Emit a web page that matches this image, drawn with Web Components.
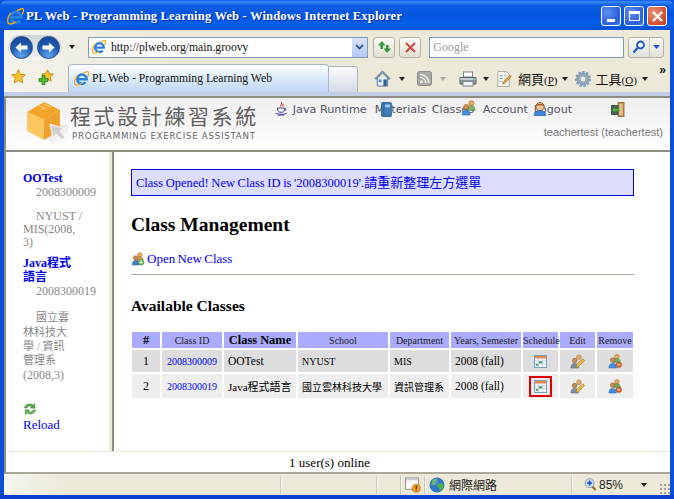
<!DOCTYPE html>
<html>
<head>
<meta charset="utf-8">
<title>PL Web</title>
<style>
    html, body { margin: 0; padding: 0; width: 674px; height: 499px; overflow: hidden; background: #0a50d8; }
</style>
</head>
<body>
<ie-window>
    <ie-titlebar slot="title"></ie-titlebar>
    <ie-navbar slot="nav"></ie-navbar>
    <ie-tabbar slot="tabs"></ie-tabbar>
    <pl-header slot="page"></pl-header>
    <pl-body slot="page">
        <pl-sidebar slot="side"></pl-sidebar>
        <pl-main slot="main"></pl-main>
    </pl-body>
    <pl-footer slot="page"></pl-footer>
    <ie-status slot="status"></ie-status>
</ie-window>

<script>
const CJK = '"Liberation Serif", "Noto Sans CJK TC", serif';
const UI_CJK = '"Liberation Sans", "Noto Sans CJK TC", sans-serif';

// all the little icons live here, keyed by name
const ICONS = {
    ie: `<svg viewBox="0 0 16 16"><path d="M4.800 8.700h8.700A5 5 0 1 0 12.300 12" fill="none" stroke="#2a82dc" stroke-width="2.700"/><path d="M3.600 4.600C1 7.600 0 12 1.100 14.100c1.400 1.900 5 .5 7-1" fill="none" stroke="#f2a61c" stroke-width="1.400"/><path d="M9.300 2.600C11.500 1 14.800 0 15.500 1.300c.5 1-.2 3-1.300 4.600" fill="none" stroke="#f2a61c" stroke-width="1.400"/></svg>`,
    star: `<svg viewBox="0 0 16 16"><path d="M8 .8l2.200 4.700 5 .6-3.700 3.500 1 5.100L8 12.200l-4.500 2.500 1-5.100L.8 6.100l5-.6z" fill="#fbc22f" stroke="#c98512" stroke-width=".9"/></svg>`,
    staradd: `<svg viewBox="0 0 16 16"><path d="M9.500 .8l1.800 3.800 4.100.5-3 2.900.8 4.100-3.700-2-3.700 2 .8-4.100-3-2.900 4.100-.5z" fill="#fbc22f" stroke="#c98512" stroke-width=".9"/><path d="M4 6.500h3v3h3v3H7v3H4v-3H1v-3h3z" fill="#55bb33" stroke="#2a7d18" stroke-width=".8"/></svg>`,
    home: `<svg viewBox="0 0 18 18"><path d="M3.500 8v9h11V8" fill="#e8eef6" stroke="#5c7390"/><path d="M9 1L1 9l1 1 7-6.800L16 10l1-1z" fill="#8aa7cc" stroke="#4b6488" stroke-width=".8"/><rect x="10" y="10" width="3.500" height="7" fill="#2a5da0"/><rect x="5" y="10" width="3" height="3" fill="#5a8ad0"/></svg>`,
    rss: `<svg viewBox="0 0 15 15"><rect x=".5" y=".5" width="14" height="14" rx="2" fill="#a9a9a4" stroke="#8c8c88"/><circle cx="4.500" cy="10.800" r="1.500" fill="#eee"/><path d="M3.200 6.500a5.300 5.300 0 0 1 5.500 5.500M3.200 3.500a8.400 8.400 0 0 1 8.500 8.500" fill="none" stroke="#eee" stroke-width="1.500"/></svg>`,
    print: `<svg viewBox="0 0 18 16"><rect x="4.500" y="1" width="9" height="5" fill="#fff" stroke="#7d8590"/><path d="M1 6.500h16v6.500H1z" fill="#8e95a0" stroke="#596069"/><rect x="1.500" y="7" width="15" height="2" fill="#c8ced6"/><rect x="4" y="10.500" width="10" height="4.500" fill="#f5f5f5" stroke="#7d8590"/><rect x="14" y="7.500" width="2" height="1" fill="#46b04a"/></svg>`,
    page: `<svg viewBox="0 0 16 17"><path d="M1.500 .5h9l3 3v13h-12z" fill="#f7f7f2" stroke="#a8a8a0"/><path d="M3.500 5h3M3.500 8h3M3.500 11h2" stroke="#7f9db9"/><path d="M8 5h3M8 8h1" stroke="#b0b0a8"/><path d="M6.500 14l.8-2.500 7-7 1.500 1.500-7 7z" fill="#e8a33a" stroke="#99651b" stroke-width=".6"/></svg>`,
    gear: `<svg viewBox="0 0 16 16"><circle cx="8" cy="8" r="5" fill="none" stroke="#8ba2bd" stroke-width="3"/><circle cx="8" cy="8" r="7" fill="none" stroke="#7d97b5" stroke-width="2" stroke-dasharray="2.400 1.600"/><circle cx="8" cy="8" r="3" fill="#f2f0e4" stroke="#6f86a2" stroke-width=".8"/></svg>`,
    java: `<svg viewBox="0 0 14 16"><path d="M7 1c1.500 2-1.800 3-.6 5M9 3C8 4.500 8 5 8.800 6" fill="none" stroke="#d8342a" stroke-width="1.100"/><path d="M3 7.500h7v2.500c0 1.500-1.500 2-3.500 2S3 11.500 3 10z" fill="#fff" stroke="#34349a"/><path d="M10 8c2.500-.5 2.500 2-.2 2.300" fill="none" stroke="#34349a"/><path d="M1 13c3 1.600 9 1.600 12 0M3 15h7" fill="none" stroke="#34349a"/></svg>`,
    book: `<svg viewBox="0 0 12 17"><rect x=".5" y=".5" width="11" height="16" rx="1" fill="#3f7fb8" stroke="#235a8e"/><rect x="2.500" y="1" width="1" height="15" fill="#2a6398"/><rect x="4.500" y="3" width="5.500" height="3" fill="#a8d0ee"/></svg>`,
    users: `<svg viewBox="0 0 16 17"><circle cx="10.500" cy="3.500" r="2.800" fill="#e8a860" stroke="#a86a28" stroke-width=".6"/><path d="M6.500 11c0-3.500 1.500-4.800 4-4.800s4 1.300 4 4.800z" fill="#7cb860" stroke="#4d8a38" stroke-width=".6"/><circle cx="5" cy="7.500" r="2.800" fill="#d89048" stroke="#8a5a28" stroke-width=".6"/><path d="M.8 16c0-3.800 1.500-5.300 4.200-5.300s4.200 1.500 4.200 5.300z" fill="#3f8ede" stroke="#2565ab" stroke-width=".6"/></svg>`,
    user: `<svg viewBox="0 0 14 15"><circle cx="7" cy="5" r="4.500" fill="#f0c090" stroke="#8a5228"/><path d="M2.500 4.500C3 1 11 1 11.500 4.500 9 3 5 3 2.500 4.500z" fill="#9a5a28"/><path d="M.8 14.500c0-4 2.500-5 6.200-5s6.200 1 6.200 5z" fill="#3c86dc" stroke="#1f55a3" stroke-width=".7"/></svg>`,
    exit: `<svg viewBox="0 0 15 15"><rect x="8" y=".5" width="6" height="14" fill="#c89a58" stroke="#8a6230" stroke-width=".8"/><rect x="9.500" y="2" width="3" height="11" fill="#e8c48a"/><rect x="1" y="3" width="7.500" height="10" fill="#4e5a50"/><path d="M2 8l3-3v1.800h4v2.400H5V11z" fill="#58c048" stroke="#2d7a22" stroke-width=".6"/></svg>`,
    addclass: `<svg viewBox="0 0 14 15"><circle cx="9" cy="3" r="2.500" fill="#eaa850" stroke="#a86a28" stroke-width=".5"/><path d="M6 9c0-3 1-4 3-4s3.500 1 3.500 4z" fill="#d8a058" stroke="#a07030" stroke-width=".5"/><circle cx="4.500" cy="6.500" r="2.500" fill="#c88a50" stroke="#7a5028" stroke-width=".5"/><path d="M.8 14c0-3.500 1.200-4.800 3.700-4.800S8 10.500 8 14z" fill="#3f80c8" stroke="#265f9e" stroke-width=".5"/><circle cx="10.300" cy="11" r="3" fill="#5cb848" stroke="#2f8022" stroke-width=".5"/><path d="M10.300 9v4M8.300 11h4" stroke="#fff"/></svg>`,
    reload: `<svg viewBox="0 0 14 14"><path d="M1.500 6C2 2.500 6.500 .8 10 3l1.500-1.500.5 4.700-4.700-.3L8.800 4.500C6.500 3.500 4.500 4.300 3.800 6z" fill="#59a84e" stroke="#36782e" stroke-width=".5"/><path d="M12.500 8c-.5 3.500-5 5.200-8.500 3L2.500 12.500 2 7.800l4.700.3-1.500 1.400c2.300 1 4.300.2 5-1.500z" fill="#72b860" stroke="#36782e" stroke-width=".5"/></svg>`,
    calendar: `<svg viewBox="0 0 13 13"><rect x=".5" y=".5" width="12" height="12" fill="#f5f7fa" stroke="#7a9cc0"/><rect x="1" y="1" width="11" height="2.500" fill="#e8894a"/><path d="M1 6h11M1 8.500h11M4.500 3.500V12M8.500 3.500V12" stroke="#b8cce0" stroke-width=".7"/><rect x="4.800" y="6.300" width="3.400" height="2" fill="#44a050"/><rect x="2" y="9" width="2.200" height="1.800" fill="#44a050"/></svg>`,
    edit: `<svg viewBox="0 0 16 16"><circle cx="9.500" cy="3.500" r="2.500" fill="#e8a860" stroke="#a06a28" stroke-width=".5"/><circle cx="5" cy="7" r="2.500" fill="#c88a50" stroke="#7a5028" stroke-width=".5"/><path d="M1 15c0-3.500 1.500-5 4-5s4 1.500 4 5z" fill="#7890a8" stroke="#4a6078" stroke-width=".5"/><path d="M6 14.500l1-3 6.500-6.500 2 2L9 13.500z" fill="#f0b840" stroke="#9a6a18" stroke-width=".6"/></svg>`,
    remove: `<svg viewBox="0 0 16 16"><circle cx="9.500" cy="3" r="2.500" fill="#eaa850" stroke="#a06a28" stroke-width=".5"/><path d="M6 9c0-3 1.200-4 3.500-4S13 6 13 9z" fill="#6cae58" stroke="#40803a" stroke-width=".5"/><circle cx="5" cy="6.500" r="2.500" fill="#c88a50" stroke="#7a5028" stroke-width=".5"/><path d="M1 15c0-3.500 1.300-5 4-5s4 1.500 4 5z" fill="#3f8ede" stroke="#265f9e" stroke-width=".5"/><circle cx="11.500" cy="11.500" r="3" fill="#dd6a30" stroke="#9a3c10" stroke-width=".5"/><path d="M10 11.500h3" stroke="#fff"/></svg>`,
    shield: `<svg viewBox="0 0 17 16"><rect x=".5" y=".5" width="14" height="12" fill="#fbfaf2" stroke="#8c8c84"/><rect x="1" y="1" width="13" height="2" fill="#c4ccd8"/><circle cx="12" cy="11.500" r="4.300" fill="#f2a020" stroke="#b06e10" stroke-width=".6"/><path d="M12 8.800v3.400M12 13v1" stroke="#222" stroke-width="1.300"/></svg>`,
    globe: `<svg viewBox="0 0 16 16"><circle cx="8" cy="8" r="7.500" fill="#2f78c8"/><path d="M3 4c2-2 4-2.500 5-2l-.5 2-2 1 .5 2-2 1.500-2-1.500zM9 7l4-1 2 3-2 4-2 1-1-3-2-1.500z" fill="#50b04a"/><circle cx="6" cy="5" r="3" fill="#fff" opacity=".18"/></svg>`,
    zoom: `<svg viewBox="0 0 13 14"><path d="M8 8.500l4 4.500" stroke="#a86a28" stroke-width="2.400"/><circle cx="5.500" cy="5.500" r="4.800" fill="#cfe0f5" stroke="#8a98a8"/><path d="M5.500 2.800v5.400M2.800 5.500h5.400" stroke="#1a55c8" stroke-width="1.800"/></svg>`
};

class UiIcon extends HTMLElement {
    connectedCallback() {
        const size = this.getAttribute('size') || 16;
        this.attachShadow({ mode: 'open' }).innerHTML = `
            <style>
                :host { display: inline-block; width: ${size}px; height: ${size}px; line-height: 0; flex: none; }
                svg { width: 100%; height: 100%; display: block; }
            </style>
            ${ICONS[this.getAttribute('name')] || ''}
        `;
    }
}

class IeWindow extends HTMLElement {
    constructor() {
        super();
        this.attachShadow({ mode: 'open' }).innerHTML = `
            <style>
                :host { display: flex; flex-direction: column; width: 674px; height: 499px; background: #0a50d8; border-radius: 7px 7px 0 0; overflow: hidden; }
                .frame { display: flex; flex-direction: column; flex: 1; min-height: 0; margin: 0 4px; }
                .page { flex: 1; min-height: 0; display: flex; flex-direction: column; background: #fff; border: 2px solid #8f8d83; border-right: 0; border-bottom: 2px solid #aca899; border-top-color: #8f8d83; }
                .bottom { height: 4px; background: #0a3fd0; flex: none; }
            </style>
            <slot name="title"></slot>
            <div class="frame">
                <slot name="nav"></slot>
                <slot name="tabs"></slot>
                <div class="page"><slot name="page"></slot></div>
                <slot name="status"></slot>
            </div>
            <div class="bottom"></div>
        `;
    }
}

class IeTitlebar extends HTMLElement {
    constructor() {
        super();
        this.attachShadow({ mode: 'open' }).innerHTML = `
            <style>
                :host { display: flex; align-items: center; flex: none; height: 30px; box-sizing: border-box; padding: 2px 7px 0 7px; gap: 3px;
                    background: linear-gradient(#0a5ae8 0, #3a8cf4 2px, #0d60e6 5px, #0555e0 14px, #0660ea 24px, #0350d4 30px); }
                ui-icon { margin-right: -1px; }
                .t { flex: 1; font: bold 12.500px ${CJK}; color: #fff; text-shadow: 1px 1px 1px #0a2fa0; letter-spacing: .18px; white-space: nowrap; }
                .btn { width: 20px; height: 20px; box-sizing: border-box; border: 1px solid #fff; border-radius: 3px; display: flex; align-items: center; justify-content: center;
                    background: radial-gradient(circle at 30% 30%, #5d8ff0, #2a5ed8 70%, #4a7cec); }
                .x { background: radial-gradient(circle at 30% 30%, #e89078, #d0502c 70%, #b83c18); }
                .min i { width: 8px; height: 3px; background: #fff; display: block; margin-top: 9px; margin-right: 1px; }
                .max i { width: 11px; height: 10px; border: 1px solid #fff; border-top-width: 3px; box-sizing: border-box; display: block; }
            </style>
            <ui-icon name="ie" size="17"></ui-icon>
            <span class="t">PL Web - Programming Learning Web - Windows Internet Explorer</span>
            <span class="btn min"><i></i></span>
            <span class="btn max"><i></i></span>
            <span class="btn x"><svg width="13" height="13" viewBox="0 0 13 13"><path d="M2 2l9 9M11 2l-9 9" stroke="#fff" stroke-width="2.400"/></svg></span>
        `;
    }
}

class IeNavbar extends HTMLElement {
    constructor() {
        super();
        const arrow = d => `<span class="round"><svg width="15" height="15" viewBox="0 0 15 15"><path d="${d}" fill="#fff"/></svg></span>`;
        this.attachShadow({ mode: 'open' }).innerHTML = `
            <style>
                :host { display: flex; align-items: center; flex: none; height: 33px; box-sizing: border-box; padding: 1px 6px 0 4px;
                    background: linear-gradient(90deg, #f4f3ec, #ece9d8 25%); }
                .pair { display: flex; gap: 4px; padding: 1px 2px; border-radius: 13px; background: linear-gradient(#cfd3d8, #f6f6f4); }
                .round { width: 23px; height: 23px; border-radius: 50%; display: flex; align-items: center; justify-content: center; border: 1px solid #2c4d86; box-sizing: border-box;
                    background: radial-gradient(circle at 50% 90%, #5ca4ee, #1c58b0 55%, #16408c); }
                .caret { width: 0; height: 0; border: 3.500px solid transparent; border-top: 4px solid #222; border-bottom: 0; }
                .addr { width: 281px; height: 21px; box-sizing: border-box; margin-left: 13px; border: 1px solid #7f9db9; background: #fff; display: flex; align-items: center; padding-left: 3px; font: 11.700px ${CJK}; color: #111; }
                .addr span { flex: 1; margin-left: 5px; }
                .drop { width: 15px; height: 19px; background: linear-gradient(#d6e2fa, #b4c8f4); display: flex; align-items: center; justify-content: center; }
                .tool { width: 22px; height: 21px; box-sizing: border-box; border: 1px solid #b4b2a4; border-radius: 3px; background: linear-gradient(#fbfbf7, #e2e0d2); display: flex; align-items: center; justify-content: center; }
                .search { width: 195px; height: 21px; box-sizing: border-box; margin-left: 8px; border: 1px solid #7f9db9; background: #fff; font: 12px ${CJK}; color: #9a9a9a; padding: 2px 3px; }
                .sbtn { display: flex; margin-left: 4px; height: 21px; box-sizing: border-box; border: 1px solid #b4b2a4; border-radius: 3px; background: linear-gradient(#fbfbf7, #dfe0d8); }
                .sbtn span { display: flex; align-items: center; justify-content: center; }
            </style>
            <span class="pair">
                ${arrow('M1.500 7.500L7 2.500v3h6.500v4H7v3z')}
                ${arrow('M13.500 7.500L8 2.500v3H1.500v4H8v3z')}
            </span>
            <span class="caret" style="margin-left:7px"></span>
            <div class="addr">
                <ui-icon name="ie" size="14"></ui-icon>
                <span>http://plweb.org/main.groovy</span>
                <div class="drop"><svg width="9" height="6" viewBox="0 0 9 6"><path d="M1 1l3.500 3.500L8 1" fill="none" stroke="#3c5a8c" stroke-width="1.800"/></svg></div>
            </div>
            <span class="tool" style="margin-left:5px"><svg width="15" height="14" viewBox="0 0 15 14"><path d="M5 1L1 5.500h2.500V9H6V5.500h2.500zM10 13l4-4.500h-2.500V5H9v3.500H6.500z" fill="#2e9a38"/></svg></span>
            <span class="tool" style="margin-left:4px"><svg width="13" height="13" viewBox="0 0 13 13"><path d="M2 2l9 9M11 2l-9 9" stroke="#cf4a4a" stroke-width="2.200"/></svg></span>
            <div class="search">Google</div>
            <div class="sbtn">
                <span style="width:20px;border-right:1px solid #c4c4bc"><svg width="14" height="14" viewBox="0 0 14 14"><circle cx="8.500" cy="5" r="3.500" fill="none" stroke="#1e55d0" stroke-width="1.800"/><path d="M6 7.500L1.500 12.500" stroke="#1e55d0" stroke-width="2.200"/></svg></span>
                <span style="width:13px"><svg width="7" height="4" viewBox="0 0 7 4"><path d="M0 0h7L3.500 4z" fill="#1e55d0"/></svg></span>
            </div>
        `;
    }
}

class IeTabbar extends HTMLElement {
    constructor() {
        super();
        this.attachShadow({ mode: 'open' }).innerHTML = `
            <style>
                :host { display: flex; align-items: flex-end; flex: none; height: 33px; box-sizing: border-box; padding-left: 6px; position: relative; font: 13px ${CJK}; color: #111;
                    background: linear-gradient(90deg, #f4f3ec, #ece9d8 25%); border-bottom: 4px solid #c3cfe6; }
                .favs { display: flex; gap: 12px; align-self: center; margin-top: -1px; padding-left: 1px; }
                .tab { width: 261px; height: 28px; box-sizing: border-box; margin-left: 14px; display: flex; align-items: center; gap: 3px; padding: 0 0 0 5px; border: 1px solid #a9b4c8; border-bottom: 0; border-radius: 4px 4px 0 0;
                    font: 11.700px ${CJK}; background: linear-gradient(#fdfeff, #e6f0fc 35%, #bfd6f4); }
                .stub { width: 29px; height: 26px; box-sizing: border-box; border: 1px solid #a9b4c8; border-bottom: 0; border-left: 0; border-radius: 0 4px 0 0; background: linear-gradient(#fbfbfb, #d4dbe8); }
                .tools { display: flex; align-items: center; align-self: center; margin-left: 16px; height: 24px; margin-top: 2px; }
                .caret { width: 0; height: 0; border: 3.500px solid transparent; border-top: 4px solid #222; border-bottom: 0; }
                .caret.off { border-top-color: #a8a8a0; }
                .lbl { margin-left: 4px; white-space: nowrap; }
                .lbl small { font-size: 11px; }
                .lbl u { text-decoration: underline; }
                .more { position: absolute; right: 4px; top: 0; font: bold 12px "Liberation Sans", sans-serif; }
            </style>
            <div class="favs">
                <ui-icon name="star" size="15"></ui-icon>
                <ui-icon name="staradd" size="16"></ui-icon>
            </div>
            <div class="tab"><ui-icon name="ie" size="15"></ui-icon>PL Web - Programming Learning Web</div>
            <div class="stub"></div>
            <div class="tools">
                <ui-icon name="home" size="17"></ui-icon>
                <span class="caret" style="margin:0 12px 0 8px"></span>
                <ui-icon name="rss" size="15"></ui-icon>
                <span class="caret off" style="margin:0 13px 0 8px"></span>
                <ui-icon name="print" size="18"></ui-icon>
                <span class="caret" style="margin:0 7px 0 6px"></span>
                <ui-icon name="page" size="16"></ui-icon>
                <span class="lbl" style="margin-left:6px">網頁<small>(<u>P</u>)</small></span>
                <span class="caret" style="margin:0 7px 0 5px"></span>
                <ui-icon name="gear" size="16"></ui-icon>
                <span class="lbl">工具<small>(<u>O</u>)</small></span>
                <span class="caret" style="margin-left:5px"></span>
            </div>
            <span class="more">»</span>
        `;
    }
}

class PlHeader extends HTMLElement {
    constructor() {
        super();
        this.attachShadow({ mode: 'open' }).innerHTML = `
            <style>
                :host { display: flex; flex: none; height: 54px; box-sizing: border-box; position: relative; background: linear-gradient(#efefef, #fff); border-bottom: 2px solid #8f8d83; }
                .logo { margin: 3px 0 0 16px; flex: none; }
                .brand { flex: none; }
                .zh { font: 21px/28px "Noto Sans CJK TC", sans-serif; color: #606060; letter-spacing: 2.600px; white-space: nowrap; margin-top: 3px; }
                .en { font: 8.600px/12px "DejaVu Sans", sans-serif; color: #666; letter-spacing: .77px; white-space: nowrap; margin: 1px 0 0 2px; }
                .menu { flex: 1; margin-left: 5px; font: 11.200px/14px "DejaVu Sans", sans-serif; color: #555566; position: relative; }
                .m { position: absolute; top: 5px; white-space: nowrap; }
                .who { position: absolute; right: 7px; top: 27px; font: 11px/14px "Liberation Sans", sans-serif; color: #777; white-space: nowrap; }
                ui-icon { position: absolute; }
            </style>
            <svg class="logo" width="48" height="48" viewBox="0 0 48 48">
                <defs><linearGradient id="sh" x1="0" y1="0" x2="1" y2="1"><stop offset="0" stop-color="#888" stop-opacity=".6"/><stop offset="1" stop-color="#fff" stop-opacity="0"/></linearGradient></defs>
                <path d="M24 26l22-2v18H28z" fill="url(#sh)"/>
                <path d="M5 11L22 1l16 8-16 10z" fill="#f4a528"/>
                <path d="M5 11l17 8v20L5 30z" fill="#fcc75e"/>
                <path d="M22 19l16-10v20L22 39z" fill="#eda02c"/>
                <path d="M17 5l8 3M21 3l8 3M22 7l-3 2" stroke="#fbd488" stroke-width="1"/>
                <path d="M28 23l15 5-5 2 5 6-3 3-6-6-3 5z" fill="#d0d0d0" stroke="#fff" stroke-width="1"/>
            </svg>
            <div class="brand">
                <div class="zh">程式設計練習系統</div>
                <div class="en">PROGRAMMING EXERCISE ASSISTANT</div>
            </div>
            <div class="menu">
                <span class="m" style="left:29px">Java Runtime</span>
                <span class="m" style="left:111px">Materials</span>
                <span class="m" style="left:168px">Classes</span>
                <span class="m" style="left:219px">Account</span>
                <span class="m" style="left:270px">Logout</span>
                <ui-icon name="java" size="15" style="left:10px;top:3px"></ui-icon>
                <ui-icon name="book" size="15" style="left:115px;top:4px"></ui-icon>
                <ui-icon name="users" size="16" style="left:197px;top:2px"></ui-icon>
                <ui-icon name="user" size="14" style="left:269px;top:4px"></ui-icon>
                <ui-icon name="exit" size="15" style="left:346px;top:4px"></ui-icon>
            </div>
            <span class="who">teachertest (teachertest)</span>
        `;
    }
}

class PlBody extends HTMLElement {
    constructor() {
        super();
        this.attachShadow({ mode: 'open' }).innerHTML = `
            <style>
                :host { display: flex; flex: 1; min-height: 0; }
                .side { flex: none; width: 106px; box-sizing: border-box; border-right: 3px solid #ece9d8; }
                .main { flex: 1; min-width: 0; border-left: 2px solid #8f8d83; }
            </style>
            <div class="side"><slot name="side"></slot></div>
            <div class="main"><slot name="main"></slot></div>
        `;
    }
}

class SideClass extends HTMLElement {
    constructor() {
        super();
        this.attachShadow({ mode: 'open' }).innerHTML = `
            <style>
                :host { display: block; font: 12px/14.300px ${CJK}; color: #888; white-space: nowrap; }
                .name { color: #0000ee; font-weight: bold; }
                .id { padding-left: 13px; margin: 0 0 var(--id-gap, 10px); }
            </style>
            <div class="name"><slot name="name"></slot></div>
            <div class="id"><slot name="id"></slot></div>
            <slot></slot>
        `;
    }
}

class PlSidebar extends HTMLElement {
    constructor() {
        super();
        this.attachShadow({ mode: 'open' }).innerHTML = `
            <style>
                :host { display: block; padding: 19px 0 0 17px; font: 12px/14.300px ${CJK}; }
                side-class { margin-bottom: 7px; }
                .in { padding-left: 13px; }
                .tight { line-height: 13px; }
                .zh { font-size: 11px; }
                .reload { margin-top: 20px; color: #0000ee; font-size: 13px; }
                .reload ui-icon { display: block; margin-bottom: 2px; }
            </style>
            <side-class>
                <span slot="name">OOTest</span>
                <span slot="id">2008300009</span>
                <div class="tight">
                    <div class="in">NYUST /</div>
                    MIS(2008,<br>3)
                </div>
            </side-class>
            <side-class style="--id-gap: 12px">
                <span slot="name">Java程式<br>語言</span>
                <span slot="id">2008300019</span>
                <div class="in zh">國立雲</div>
                <span class="zh">林科技大<br>學 / 資訊<br>管理系</span><br>
                (2008,3)
            </side-class>
            <div class="reload"><ui-icon name="reload" size="14"></ui-icon>Reload</div>
        `;
    }
}

class PlMain extends HTMLElement {
    constructor() {
        super();
        const rows = [
            ['1', '2008300009', 'OOTest', 'NYUST', 'MIS', false],
            ['2', '2008300019', 'Java程式語言', '國立雲林科技大學', '資訊管理系', true]
        ];
        this.attachShadow({ mode: 'open' }).innerHTML = `
            <style>
                :host { display: block; padding: 17px 36px 0 17px; font: 12px ${CJK}; color: #000; }
                .msg { height: 27px; box-sizing: border-box; border: 1px solid #0000ee; background: #ddddff; color: #0000ee; padding: 0 4px; font-size: 12.500px; line-height: 26px; white-space: nowrap; word-spacing: -.5px; }
                .msg span { font-size: 13px; }
                h1 { font-size: 19.500px; line-height: 22px; margin: 18px 0 0; }
                .open { display: flex; align-items: center; gap: 2px; margin-top: 15px; color: #0000ee; font-size: 13px; line-height: 16px; }
                .open span { word-spacing: -1px; }
                hr { height: 1px; border: 0; background: #aca899; margin: 7px 0 0; }
                h2 { font-size: 15.500px; line-height: 18px; margin: 22px 0 0; }
                table { border-collapse: separate; border-spacing: 2px; table-layout: fixed; width: 505px; margin: 15px 0 0 -1px; }
                th, td { padding: 0; text-align: center; overflow: visible; white-space: nowrap; }
                th { background: #aaaaff; font-weight: normal; font-size: 10px; height: 16px; color: #222; }
                th.b { font-weight: bold; font-size: 12.400px; color: #000; }
                td { background: #dddddd; height: 22px; }
                tr.r2 td { background: #eeeeee; height: 24px; }
                td.l { text-align: left; padding-left: 4px; font-size: 10px; }
                td.n { font-size: 11.500px; }
                tr.r2 td.n { font-size: 11px; }
                td.id { color: #0000ee; font-size: 10px; }
                td.yr { text-align: left; padding-left: 4px; font-size: 11.500px; }
                ui-icon { vertical-align: middle; }
                .mark { display: inline-flex; align-items: center; justify-content: center; width: 23px; height: 21px; box-sizing: border-box; border: 2px solid #e00000; vertical-align: middle; }
            </style>
            <div class="msg">Class Opened! New Class ID is '2008300019'.<span>請重新整理左方選單</span></div>
            <h1>Class Management</h1>
            <div class="open"><ui-icon name="addclass" size="14"></ui-icon><span>Open New Class</span></div>
            <hr>
            <h2>Available Classes</h2>
            <table>
                <colgroup>
                    <col style="width:28px"><col style="width:60px"><col style="width:72px"><col style="width:90px"><col style="width:59px"><col style="width:70px"><col style="width:35px"><col style="width:35px"><col style="width:36px">
                </colgroup>
                <tr>
                    <th class="b">#</th><th>Class ID</th><th class="b">Class Name</th><th>School</th><th>Department</th><th>Years, Semester</th><th>Schedule</th><th>Edit</th><th>Remove</th>
                </tr>
                ${rows.map((r, i) => `
                <tr class="r${i + 1}">
                    <td>${r[0]}</td>
                    <td class="id">${r[1]}</td>
                    <td class="l n">${r[2]}</td>
                    <td class="l">${r[3]}</td>
                    <td class="l">${r[4]}</td>
                    <td class="yr">2008 (fall)</td>
                    <td>${r[5] ? '<span class="mark"><ui-icon name="calendar" size="13"></ui-icon></span>' : '<ui-icon name="calendar" size="13"></ui-icon>'}</td>
                    <td><ui-icon name="edit" size="15"></ui-icon></td>
                    <td><ui-icon name="remove" size="15"></ui-icon></td>
                </tr>`).join('')}
            </table>
        `;
    }
}

class PlFooter extends HTMLElement {
    constructor() {
        super();
        this.attachShadow({ mode: 'open' }).innerHTML = `
            <style>
                :host { display: block; flex: none; height: 21px; box-sizing: border-box; border-top: 1px solid #ece9d8; padding: 1px 17px 0 0; text-align: center; font: 13px/20px ${CJK}; color: #000; background: #fff; }
            </style>
            1 user(s) online
        `;
    }
}

class IeStatus extends HTMLElement {
    constructor() {
        super();
        this.attachShadow({ mode: 'open' }).innerHTML = `
            <style>
                :host { display: flex; align-items: center; flex: none; height: 21px; box-sizing: border-box; background: linear-gradient(90deg, #f6f5ef, #ece9d8 10%); font: 12px ${UI_CJK}; color: #222; position: relative; }
                .s { width: 1px; height: 18px; background: #fff; border-left: 1px solid #c8c5b4; flex: none; }
                .c { position: absolute; right: 23px; width: 0; height: 0; border: 3.500px solid transparent; border-top: 4px solid #222; border-bottom: 0; }
                .grip { position: absolute; right: 0; bottom: 1px; width: 11px; height: 11px; background: radial-gradient(circle, #a8a596 1px, transparent 1.200px) 0 0/4px 4px; }
            </style>
            <span class="s" style="margin-left:276px"></span>
            <span class="s" style="margin-left:94px"></span>
            <span class="s" style="margin-left:22px"></span>
            <ui-icon name="shield" size="16" style="margin-left:3px"></ui-icon>
            <span class="s" style="margin-left:3px"></span>
            <ui-icon name="globe" size="16" style="margin-left:3px"></ui-icon>
            <span style="margin-left:4px;font-size:12px;white-space:nowrap">網際網路</span>
            <span class="s" style="margin-left:74px"></span>
            <ui-icon name="zoom" size="13" style="margin-left:11px"></ui-icon>
            <span style="margin-left:2px;font-size:12px">85%</span>
            <span class="c"></span>
            <span class="grip"></span>
        `;
    }
}

customElements.define('ui-icon', UiIcon);
customElements.define('ie-window', IeWindow);
customElements.define('ie-titlebar', IeTitlebar);
customElements.define('ie-navbar', IeNavbar);
customElements.define('ie-tabbar', IeTabbar);
customElements.define('pl-header', PlHeader);
customElements.define('pl-body', PlBody);
customElements.define('side-class', SideClass);
customElements.define('pl-sidebar', PlSidebar);
customElements.define('pl-main', PlMain);
customElements.define('pl-footer', PlFooter);
customElements.define('ie-status', IeStatus);
</script>
</body>
</html>
